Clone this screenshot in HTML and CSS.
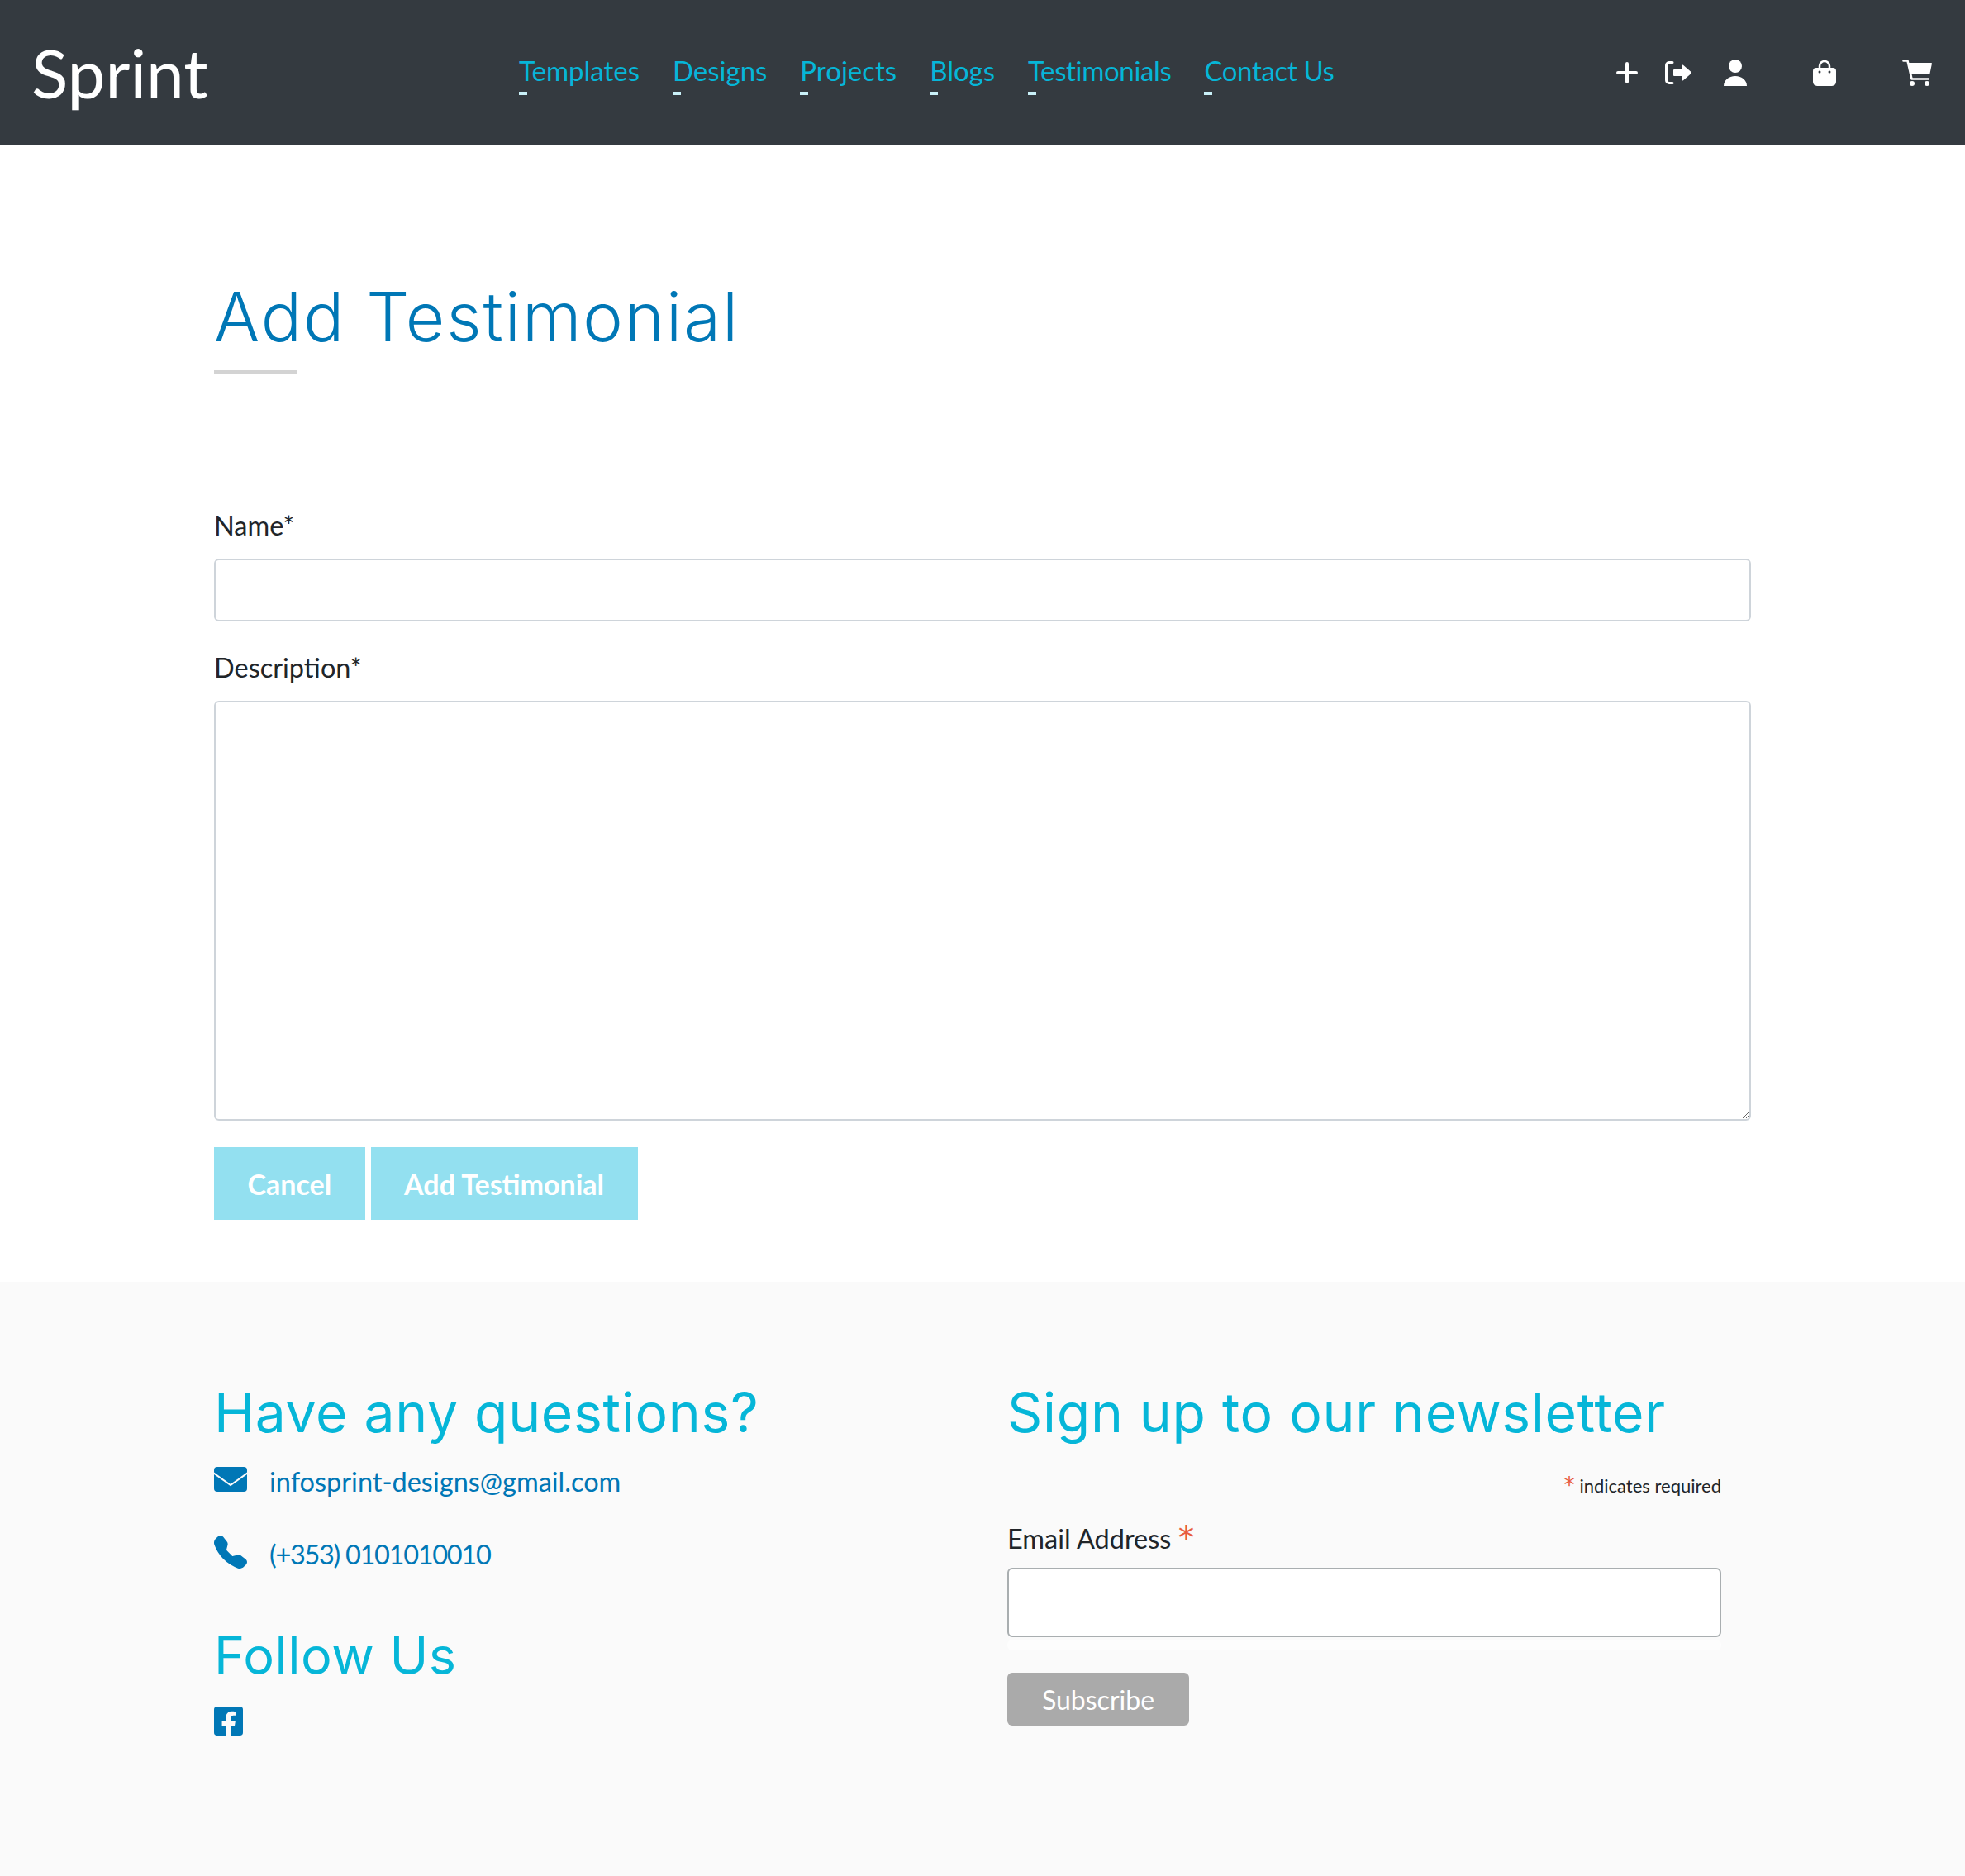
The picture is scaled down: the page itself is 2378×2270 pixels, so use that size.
FILE: index.html
```html
<!DOCTYPE html>
<html>
<head>
    <title>Sprint</title>
    <link rel="stylesheet" href="styles.css">
</head>
<body>
    <header class="topbar">
        <a class="logo" href="#">Sprint</a>
        <nav class="nav">
            <a class="nav-link" href="#">Templates</a>
            <a class="nav-link" href="#">Designs</a>
            <a class="nav-link" href="#">Projects</a>
            <a class="nav-link" href="#">Blogs</a>
            <a class="nav-link nav-tight" href="#">Testimonials</a>
            <a class="nav-link nav-tight" href="#">Contact Us</a>
        </nav>
        <div class="icons">
            <svg class="icon-plus" viewBox="0 0 26 26"><path d="M13 2V24M2 13H24" fill="none" stroke="#fff" stroke-width="4" stroke-linecap="round"/></svg>
            <svg class="icon-signout" viewBox="0 0 32 28"><path d="M9 1.500H5A3.500 3.500 0 0 0 1.500 5V23A3.500 3.500 0 0 0 5 26.500H9" fill="none" stroke="#fff" stroke-width="3" stroke-linecap="round"/><path fill="#fff" d="M11 10h9V5.500c0-1 1-1.500 2-.7L31.500 13c.7.6.7 1.400 0 2L22 23.200c-1 .8-2 .3-2-.7V18h-9a1 1 0 0 1-1-1v-6a1 1 0 0 1 1-1z"/></svg>
            <svg class="icon-user" viewBox="0 0 28 32"><circle cx="14" cy="8" r="8" fill="#fff"/><path fill="#fff" d="M0 32c0-7 6-12 14-12s14 5 14 12z"/></svg>
            <svg class="icon-bag" viewBox="0 0 28 31"><path d="M8 11V7a6 6 0 0 1 12 0v4" fill="none" stroke="#fff" stroke-width="2.500"/><path fill="#fff" d="M4 9h20a4 4 0 0 1 4 4v13a5 5 0 0 1-5 5H5a5 5 0 0 1-5-5V13a4 4 0 0 1 4-4z"/><circle cx="8" cy="14" r="1.500" fill="#343a40"/><circle cx="20" cy="14" r="1.500" fill="#343a40"/></svg>
            <svg class="icon-cart" viewBox="0 0 36 32"><path d="M1.500 1.500H6.500L11.500 23.500H32" fill="none" stroke="#fff" stroke-width="2.600" stroke-linecap="round" stroke-linejoin="round"/><path fill="#fff" d="M7.500 4H35c.7 0 1 .5.9 1.200L33.500 17c-.1.6-.6 1-1.200 1H10.500z"/><circle cx="12" cy="29" r="3" fill="#fff"/><circle cx="30" cy="29" r="3" fill="#fff"/></svg>
        </div>
    </header>

    <main class="content">
        <h1 class="page-title">Add Testimonial</h1>
        <div class="title-rule"></div>
        <form class="testimonial-form">
            <label class="field-label" for="name">Name*</label>
            <input class="field-input" type="text" id="name">
            <label class="field-label" for="description">Description*</label>
            <textarea class="field-area" id="description"></textarea>
            <div class="form-buttons">
                <button class="btn" type="button">Cancel</button>
                <button class="btn" type="button">Add Testimonial</button>
            </div>
        </form>
    </main>

    <footer class="footer">
        <div class="contact">
            <h2 class="footer-title">Have any questions?</h2>
            <a class="contact-row contact-mail" href="#">
                <svg class="contact-icon" viewBox="0 0 40 30"><rect width="40" height="30" rx="4" fill="#0077b6"/><path d="M-1 7L20 22L41 7" fill="none" stroke="#fafafa" stroke-width="2"/></svg>
                <span>infosprint-designs@gmail.com</span>
            </a>
            <a class="contact-row contact-phone" href="#">
                <svg class="contact-icon" viewBox="0 0 16 16"><path fill="#0077b6" d="M1.885.511a1.745 1.745 0 0 1 2.610.163L6.290 2.980c.329.423.445.974.315 1.494l-.547 2.190a.678.678 0 0 0 .178.643l2.457 2.457a.678.678 0 0 0 .644.178l2.189-.547a1.745 1.745 0 0 1 1.494.315l2.306 1.794c.829.645.905 1.870.163 2.611l-1.034 1.034c-.740.740-1.846 1.065-2.877.702a18.634 18.634 0 0 1-7.010-4.420 18.634 18.634 0 0 1-4.420-7.009c-.362-1.030-.037-2.137.703-2.877L1.885.511z"/></svg>
                <span>(+353) 0101010010</span>
            </a>
            <h2 class="footer-title follow-title">Follow Us</h2>
            <a class="social" href="#">
                <svg class="social-icon" viewBox="0 32 448 448"><path fill="#0077b6" d="M400 32H48A48 48 0 0 0 0 80v352a48 48 0 0 0 48 48h137.250V327.690h-63V256h63v-54.640c0-62.150 37-96.480 93.670-96.480 27.140 0 55.520 4.840 55.520 4.840v61h-31.270c-30.810 0-40.420 19.120-40.420 38.730V256h68.780l-11 71.690h-57.780V480H400a48 48 0 0 0 48-48V80a48 48 0 0 0-48-48z"/></svg>
            </a>
        </div>
        <div class="newsletter">
            <h2 class="footer-title">Sign up to our newsletter</h2>
            <form class="newsletter-form">
                <div class="required-note"><span class="star">*</span> indicates required</div>
                <label class="email-label" for="email">Email Address <span class="star">*</span></label>
                <input class="email-input" type="email" id="email">
                <div class="email-strip"></div>
                <button class="subscribe" type="button">Subscribe</button>
            </form>
        </div>
    </footer>
</body>
</html>
```

FILE: styles.css
```css
body {
    margin: 0;
    background: #fff;
    color: #212529;
    font-family: Lato, sans-serif;
    font-size: 32.5px;
}

a {
    text-decoration: none;
}

/* header */
.topbar {
    display: flex;
    align-items: center;
    height: 176px;
    padding: 0 40px 0 38px;
    background: #343a40;
}

.logo {
    width: 590px;
    margin-top: -3px;
    color: #fff;
    font-size: 82px;
    font-weight: 400;
    line-height: 96px;
}

.nav {
    display: flex;
    gap: 40px;
}

.nav-link {
    display: block;
    color: #06b6d8;
    font-size: 33px;
    line-height: 48px;
}

.nav-tight {
    letter-spacing: -.35px;
}

.nav-link::after {
    content: "";
    display: block;
    width: 10px;
    height: 4px;
    margin-top: 2px;
    background: #c9f0f8;
}

.icons {
    display: flex;
    align-items: center;
    margin-left: auto;
}

.icons svg {
    display: block;
}

.icon-plus {
    width: 26px;
    height: 26px;
}

.icon-signout {
    width: 32px;
    height: 28px;
    margin-left: 33px;
}

.icon-user {
    width: 28px;
    height: 32px;
    margin-left: 39px;
}

.icon-bag {
    width: 28px;
    height: 31px;
    margin-left: 80px;
}

.icon-cart {
    width: 36px;
    height: 32px;
    margin-left: 80px;
}

/* main form */
.content {
    height: 1375px;
    padding: 0 259px;
}

.page-title {
    margin: 0;
    padding-top: 154px;
    color: #0077b6;
    font-family: Inter, sans-serif;
    font-size: 82px;
    font-weight: 350;
    letter-spacing: 1.9px;
    line-height: 108px;
}

.title-rule {
    width: 100px;
    height: 4px;
    margin-top: 10px;
    background: #d3d3d3;
}

.testimonial-form {
    display: flex;
    flex-direction: column;
    margin-top: 160px;
}

.field-label {
    line-height: 48px;
    margin-bottom: 16px;
}

.field-input,
.field-area {
    box-sizing: border-box;
    width: 100%;
    border: 2px solid #ced4da;
    border-radius: 6px;
    background: #fff;
}

.field-input {
    height: 76px;
    margin-bottom: 32px;
}

.field-area {
    height: 508px;
}

.form-buttons {
    display: flex;
    gap: 7px;
    margin-top: 32px;
}

.btn {
    height: 88px;
    padding: 0 40.5px;
    border: 0;
    background: #93e0f0;
    color: #fff;
    font-family: Lato, sans-serif;
    font-size: 34px;
    font-weight: 700;
}

/* footer */
.footer {
    display: grid;
    grid-template-columns: 960px 864px;
    height: 719px;
    box-sizing: border-box;
    padding: 120px 0 0 259px;
    background: #fafafa;
}

.footer-title {
    margin: 0;
    color: #06b6d8;
    font-family: Inter, sans-serif;
    font-size: 66px;
    font-weight: 400;
    letter-spacing: .7px;
    line-height: 76px;
}

.contact-row {
    display: flex;
    align-items: center;
    gap: 27px;
    color: #0077b6;
    line-height: 40px;
}

.contact-mail {
    margin-top: 26px;
}

.contact-phone {
    margin-top: 48px;
    letter-spacing: -1.3px;
}

.contact-icon {
    flex: none;
    width: 40px;
    height: 40px;
    margin-top: -6px;
}

.follow-title {
    margin-top: 64px;
    font-size: 63px;
    letter-spacing: .5px;
}

.social {
    display: block;
    margin-top: 24px;
}

.social-icon {
    display: block;
    width: 35px;
    height: 35px;
}

.required-note {
    margin-top: 36px;
    font-size: 22px;
    line-height: 30px;
    text-align: right;
}

.star {
    color: #e85c41;
    font-family: "DejaVu Sans", sans-serif;
    font-size: 1.2em;
    line-height: 0;
}

.email-label {
    display: block;
    margin-top: 25px;
    line-height: 48px;
}

.email-input {
    display: block;
    box-sizing: border-box;
    width: 100%;
    height: 84px;
    margin-top: 11px;
    border: 2px solid #a9aeb0;
    border-radius: 6px;
    background: #fff;
}

.email-strip {
    height: 13px;
    margin-top: 3px;
    border-radius: 6px;
    background: #fdfdfd;
}

.subscribe {
    display: block;
    width: 220px;
    height: 64px;
    margin-top: 27px;
    border: 0;
    border-radius: 6px;
    background: #aaa;
    color: #fff;
    font-family: Lato, sans-serif;
    font-size: 32px;
}
```
